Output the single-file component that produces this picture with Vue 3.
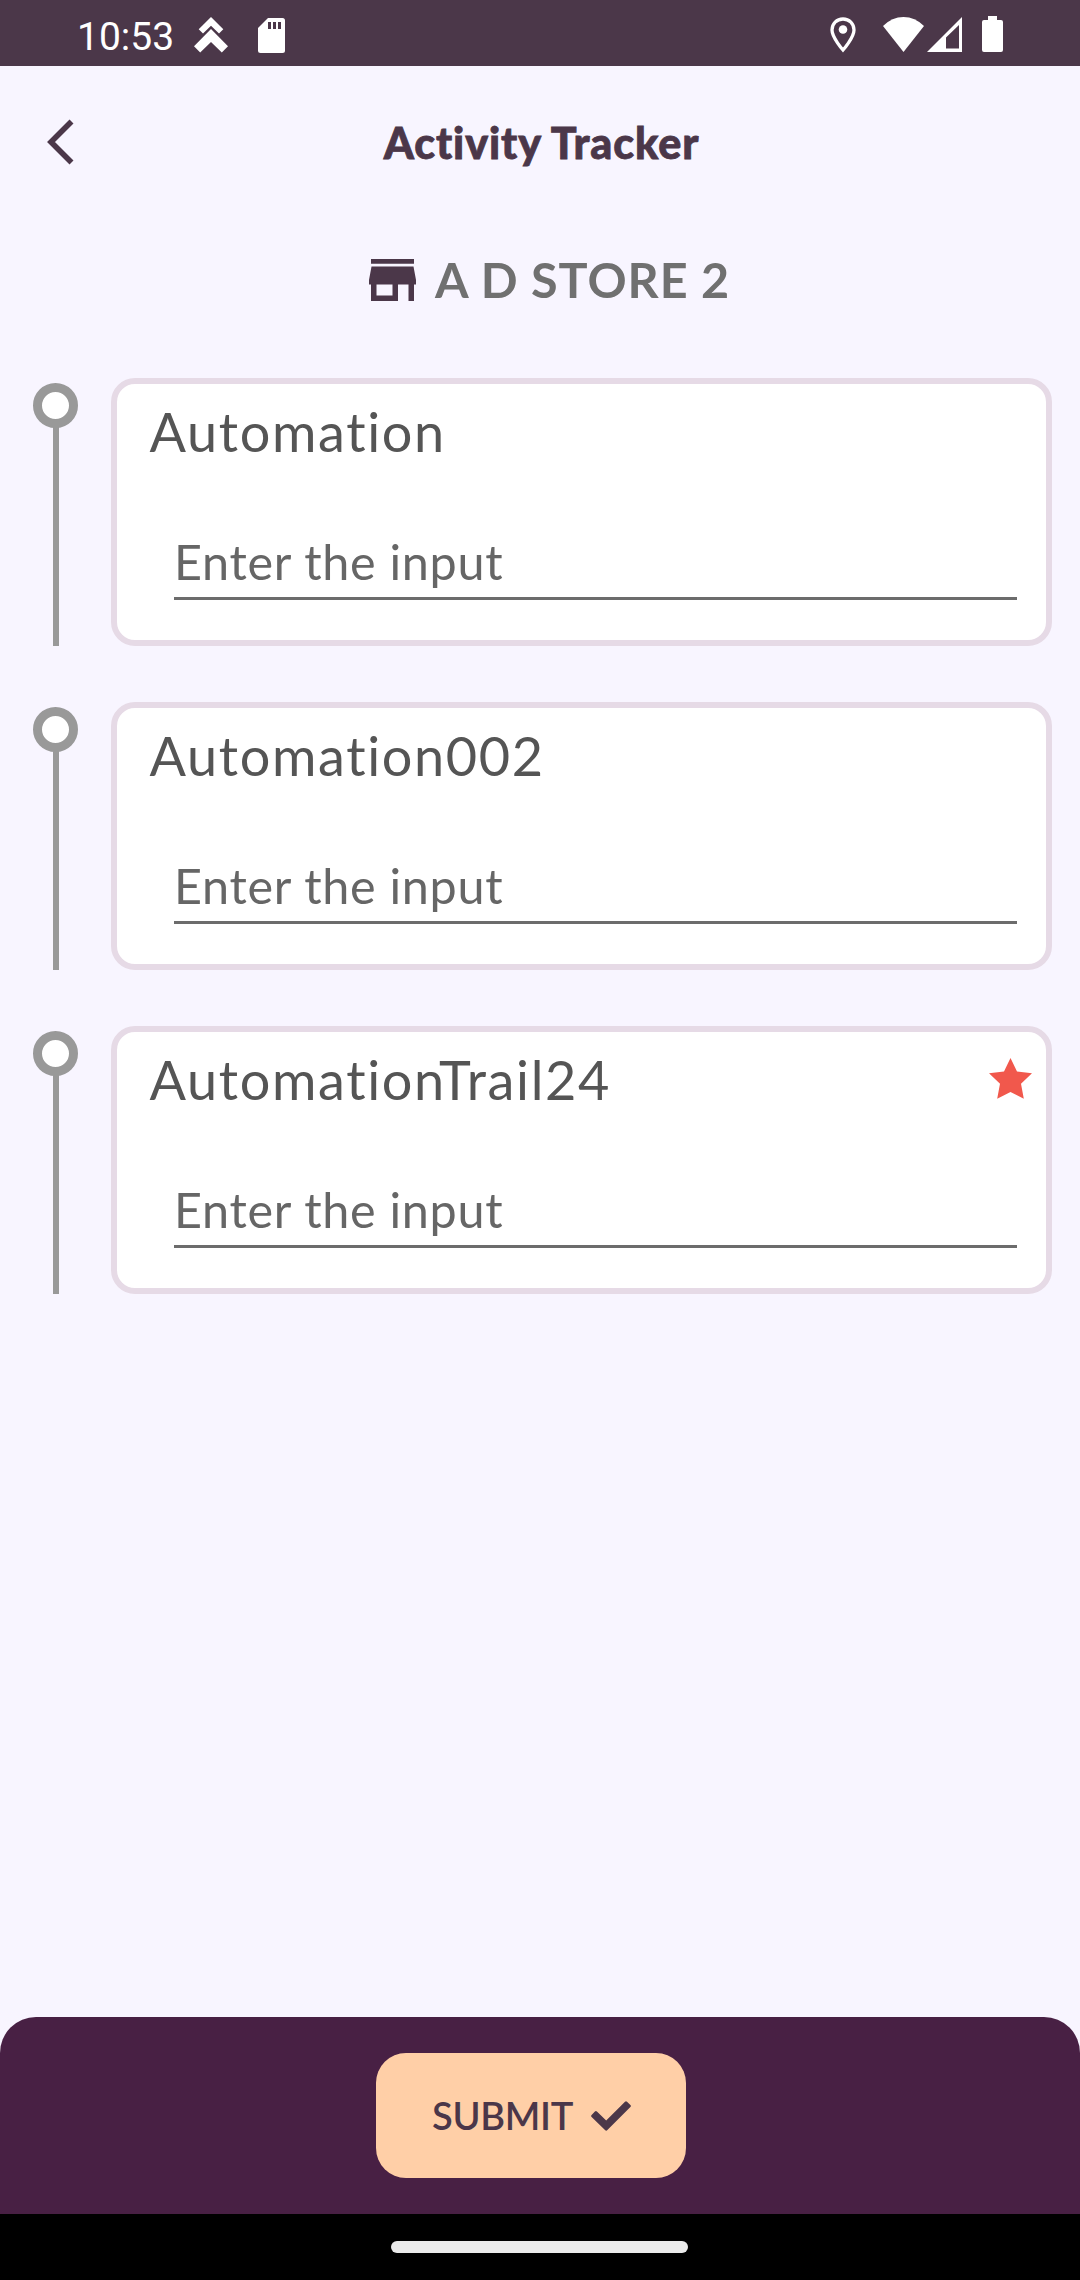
<script setup>
const activities = [
  { label: 'Automation', required: false },
  { label: 'Automation002', required: false },
  { label: 'AutomationTrail24', required: true },
]
</script>

<template>
  <div class="screen">
    <div class="status">
      <span class="clock">10:53</span>
      <svg class="ic-up" width="34" height="36" viewBox="0 0 34 36" fill="#fff">
        <path d="M17 0L29.3 12.3L25 16.6L17 8.8L9 16.6L4.7 12.3Z" />
        <path d="M17 12L34 29.3L27.8 35.5L17 25L6.200 35.5L0 29.3Z" />
      </svg>
      <svg class="ic-sd" width="27" height="35" viewBox="0 0 27 35">
        <path d="M10 0H24.500Q27 0 27 2.500V32.500Q27 35 24.500 35H2.500Q0 35 0 32.500V10Z" fill="#fff" />
        <path d="M10 4h3v7h-3zM15 4h3v7h-3zM20 4h3v7h-3z" fill="#4b3749" />
      </svg>
      <svg class="ic-pin" width="26" height="36" viewBox="0 0 26 36">
        <path d="M13 2C6.700 2 2 6.700 2 13C2 20.500 13 33 13 33S24 20.500 24 13C24 6.700 19.300 2 13 2Z" fill="none" stroke="#fff" stroke-width="3.300" />
        <circle cx="13" cy="12.500" r="4.300" fill="#fff" />
      </svg>
      <svg class="ic-wifi" width="41" height="35" viewBox="0 0 41 35" fill="#fff">
        <path d="M20.500 35L0 9Q9 0 20.500 0T41 9Z" />
      </svg>
      <svg class="ic-cell" width="35" height="35" viewBox="0 0 35 35" fill="#fff">
        <path fill-rule="evenodd" d="M35 0V35H0ZM32 8L19 20.500V31.500H32Z" />
      </svg>
      <svg class="ic-bat" width="21" height="36" viewBox="0 0 21 36" fill="#fff">
        <path d="M6 0H15V4H19Q21 4 21 6V34Q21 36 19 36H2Q0 36 0 34V6Q0 4 2 4H6Z" />
      </svg>
    </div>

    <header class="header">
      <svg class="back" width="28" height="48" viewBox="0 0 28 48">
        <path d="M24.500 3.500L4 24L24.500 44.500" fill="none" stroke="#4b3749" stroke-width="5.600" />
      </svg>
      <h1 class="title">Activity Tracker</h1>
    </header>

    <div class="store">
      <svg width="47" height="42" viewBox="0 0 47 42" fill="#4b3749">
        <path d="M2 0H45V4.700H2Z" />
        <path fill-rule="evenodd" d="M2.500 7.500H44.500L47 21V25.500H45V42H39.500V25.500H29V42H2V25.500H0V21ZM7.500 25.500V36.500H23.500V25.500Z" />
      </svg>
      <span class="store-name">A D STORE 2</span>
    </div>

    <main class="list">
      <section v-for="a in activities" :key="a.label" class="row">
        <div class="rail"><i class="dot"></i><i class="line"></i></div>
        <div class="card">
          <div class="card-head">
            <span class="label">{{ a.label }}</span>
            <svg v-if="a.required" class="star" width="43" height="41" viewBox="0 0 43 41" fill="#f1584c">
              <path d="M21.500 0L28 13.400L43 15.300L32 25.800L34.800 40.800L21.500 34L8.200 40.800L11 25.800L0 15.300L15 13.400Z" />
            </svg>
          </div>
          <div class="field">Enter the input</div>
        </div>
      </section>
    </main>

    <footer class="footer">
      <button class="submit">
        <span class="submit-text">SUBMIT</span>
        <svg width="40" height="30" viewBox="0 0 40 30" fill="#4b3749">
          <path d="M15.200 19.600L34 0.700Q35 -0.300 36 0.700L39.400 4.100Q40.400 5.100 39.400 6.100L16.400 29.100Q15.200 30.300 14 29.100L0.600 15.900Q-0.400 14.900 0.600 13.900L3.900 10.600Q4.900 9.600 5.900 10.600Z" />
        </svg>
      </button>
    </footer>
    <div class="nav"><i class="pill"></i></div>
  </div>
</template>

<style>
body { margin: 0; background: #f8f5ff; }
</style>

<style scoped>
.screen {
  width: 1080px;
  height: 2280px;
  display: flex;
  flex-direction: column;
  background: #f8f5ff;
  font-family: Lato, "Open Sans", sans-serif;
  font-variant-ligatures: none;
  overflow: hidden;
}
.status { height: 66px; flex: none; background: #4b3749; display: flex; align-items: flex-start; }
.status svg { display: block; flex: none; }
.clock { width: 100px; margin-left: 77px; margin-top: 14px; line-height: 46px; font-family: Roboto, sans-serif; font-size: 39px; color: #fff; }
.ic-up { margin: 17px 0 0 16.500px; }
.ic-sd { margin: 18px 0 0 30.500px; }
.ic-pin { margin: 17px 0 0 auto; }
.ic-wifi { margin: 17px 0 0 27px; }
.ic-cell { margin: 17px 0 0 3px; }
.ic-bat { margin: 16px 77px 0 20px; }
.header { height: 152px; flex: none; display: grid; grid-template-columns: 120px 1fr 120px; align-items: center; }
.back { margin-left: 47px; }
.title { margin: 0; padding: 2px 0 0 3px; text-align: center; font-size: 43px; font-weight: 900; line-height: 52px; letter-spacing: 0.9px; color: #4b3749; -webkit-text-stroke: 0.8px #4b3749; }
.store { height: 84px; flex: none; padding-left: 369px; display: flex; align-items: flex-start; }
.store svg { margin-top: 41px; }
.store-name { margin-left: 19px; margin-top: 31px; font-size: 48.500px; line-height: 60px; font-weight: 700; letter-spacing: 0.9px; color: #707070; white-space: nowrap; }
.list { flex: 1; padding-top: 76px; display: flex; flex-direction: column; gap: 56px; min-height: 0; }
.row { height: 268px; flex: none; display: flex; }
.rail { width: 45px; margin-left: 33px; margin-right: 33px; padding-top: 5px; display: flex; flex-direction: column; align-items: center; }
.dot { flex: none; width: 45px; height: 45px; box-sizing: border-box; border: 9px solid #999; border-radius: 50%; background: #fff; }
.line { flex: 1; width: 6px; margin-top: -1px; background: #999; }
.card { width: 941px; box-sizing: border-box; border: 6px solid #e6dae6; border-radius: 24px; background: #fff; }
.card-head { height: 96px; display: flex; justify-content: space-between; padding: 0 14px 0 32.500px; }
.label { margin-top: 15px; height: 66px; line-height: 66px; font-size: 54px; letter-spacing: 1.650px; color: #555; }
.star { margin-top: 26px; }
.field { margin: 50px 29px 0 57px; height: 67px; border-bottom: 3px solid #6c6c6c; font-size: 48.500px; line-height: 62px; letter-spacing: 0.7px; color: #666; }
.footer { height: 197px; flex: none; box-sizing: border-box; padding: 36px 0 0 376px; background: #482044; border-radius: 36px 36px 0 0; }
.submit { width: 310px; height: 125px; padding: 0 0 0 56px; border: 0; border-radius: 30px; background: #ffcfa7; display: flex; align-items: center; font: 600 38px/46px Lato, sans-serif; letter-spacing: -0.3px; color: #4b3749; }
.submit-text { width: 159px; margin-bottom: 2px; text-align: left; }
.nav { height: 66px; flex: none; box-sizing: border-box; padding-right: 1px; background: #000; display: flex; justify-content: center; align-items: flex-start; }
.pill { width: 297px; height: 12px; margin-top: 27px; border-radius: 6px; background: #ebebeb; }
</style>
